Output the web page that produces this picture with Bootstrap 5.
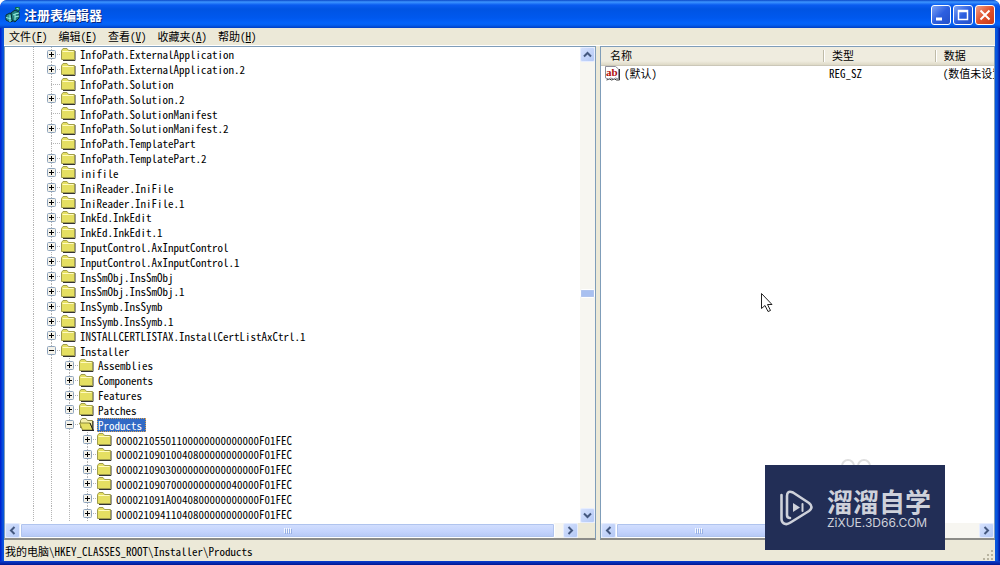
<!DOCTYPE html>
<html lang="zh-CN">
<head>
<meta charset="utf-8">
<meta name="viewport" content="width=device-width, initial-scale=1">
<title>注册表编辑器</title>
<link href="https://cdn.jsdelivr.net/npm/bootstrap@5.3.0/dist/css/bootstrap.min.css" rel="stylesheet">
<style>
:root { --face: #ece9d8; --edge: #7f9db9; --dots: #b4b4b4; }
body { background: #fff; color: #000; font: 11px/15px "Noto Sans Mono CJK SC", "Noto Sans CJK SC", "Liberation Mono", monospace; }
.window { background: linear-gradient(90deg, #0019cf, #0855dd 3px, #0855dd calc(100% - 3px), #0014a0); border-radius: 7px 7px 0 0; padding: 0 5px 0 4px; }
.window-foot { height: 4px; margin: 0 -5px 0 -4px; background: linear-gradient(#0a3fd0, #001590); }
.titlebar { height: 28px; margin: 0 -5px 0 -4px; padding: 2px 5px 0 5px; border-radius: 7px 7px 0 0; background: linear-gradient(#0a47c8, #3d95ff 2px, #0a5cf0 5px, #0054e3 9px, #0058ee 18px, #0463fa 23px, #0560f0 25px, #003fc4); }
.caption-text { font: bold 13px/20px "Noto Sans CJK SC", sans-serif; color: #fff; text-shadow: 1px 1px #0a2a80; margin-left: 3px; }
.winbtns { gap: 2px; }
.winbtn { width: 20px; height: 20px; border: 1px solid #fff; border-radius: 3px; background: linear-gradient(135deg, #7da2f5, #2d5fe0 50%, #2450c8); }
.winbtn.close-red { background: linear-gradient(135deg, #f0a08a, #e0512c 50%, #c83a18); }
.menu-strip { height: 17px; background: var(--face); padding-left: 5px; gap: 11px; }
.plain { border: 0; background: none; padding: 0; color: inherit; font: inherit; line-height: 15px; }
.panes { background: var(--face); display: grid; grid-template-columns: 592fr 4px 395fr; min-height: 0; border-top: 1px solid #fff; }
.pane { background: #fff; border: 1px solid var(--edge); border-bottom: 2px solid #8c8c88; min-width: 0; min-height: 0; }
.tree { margin: 0; padding: 0 0 2px 20px; list-style: none; }
.tree li { flex: 1 1 0; min-height: 0; line-height: 14px; }
.cell { width: 18px; flex: none; background: repeating-linear-gradient(var(--dots) 0 1px, transparent 1px 2px) 8px 0 / 1px 100% no-repeat; }
.cell.joint { background-image: repeating-linear-gradient(var(--dots) 0 1px, transparent 1px 2px), repeating-linear-gradient(90deg, var(--dots) 0 1px, transparent 1px 2px); background-size: 1px 100%, 10px 1px; background-position: 8px 0, 8px 50%; }
.cell svg { display: block; margin-left: 4px; }
.key-label { padding: 0 1px; margin-left: 3px; }
.picked { background: #316ac5; color: #fff; outline: 1px dotted #d8a050; outline-offset: -1px; padding-right: 4px; }
.sb-v { width: 15px; background: #f7f6f1; }
.sb-h { height: 15px; background: #f7f6f1; }
.sbtn { width: 15px; height: 15px; flex: none; padding: 0; border: 1px solid #e6edff; border-radius: 2px; background: linear-gradient(135deg, #d5e1fd, #b3c8f6); }
.thumb { border: 1px solid #fff; outline: 1px solid #b0c4ee; outline-offset: -2px; border-radius: 2px; background: linear-gradient(#d3dffe, #c3d3fd 60%, #b5c8f5); }
.sb-v .thumb { height: 9px; background: #a9c0f0; }
.track-top { flex: 53 1 0; }
.track-bottom { flex: 49 1 0; }
.thumb-values { width: 42%; }
.corner { width: 17px; background: var(--face); }
.values { table-layout: fixed; width: 100%; border-collapse: collapse; }
.col-name { width: 56.5%; }
.col-type { width: 28.4%; }
.values th { font-weight: normal; height: 18px; line-height: 17px; background: linear-gradient(#efecdf 14px, #ddd9c6); border-bottom: 1px solid #cbc7b8; padding: 0 0 0 9px; position: relative; }
.values th + th::before { content: ""; position: absolute; left: 0; top: 3px; height: 12px; border-left: 1px solid #bfbba8; border-right: 1px solid #fff; }
.values td { padding: 0 0 0 6px; line-height: 15px; white-space: nowrap; overflow: hidden; }
.statusline { height: 21px; background: var(--face); padding: 0 1px; line-height: 20px; }
.pointer { left: 76%; top: 292px; }
.brand { right: 55px; bottom: 15px; width: 180px; height: 85px; background: #222e56; color: #ced1da; padding-left: 14px; gap: 13px; }
.rings { right: 127px; bottom: 99px; }
.brand-name { font: bold 26px/30px "Noto Sans CJK SC", sans-serif; }
.brand-site { font: 12px/14px "Inter", sans-serif; }
</style>
</head>
<body>
<svg class="d-none">
  <symbol id="folder" viewBox="0 0 15 13"><path d="M2 12.5h12V3" fill="none" stroke="#333"/><path d="M.5 11.500v-9l1.500-2h4l1.500 2h6v9z" fill="#e5df62" stroke="#a09d4c"/><path d="M1.500 3.500h11" stroke="#fffbc0"/></symbol>
  <symbol id="opened" viewBox="0 0 15 13"><path d="M1.500 10V2.500l1.500-2h4l1.500 2h5V11" fill="#f4efaa" stroke="#8d8a4a"/><path d="M.5 5h10.500l3 7H3.500z" fill="#e5df62" stroke="#8d8a3a"/><path d="M11 5l3 7V3M3 12.500h12" fill="none" stroke="#222"/></symbol>
  <symbol id="plus" viewBox="0 0 9 9"><rect x=".5" y=".5" width="8" height="8" rx="1" fill="#f4f2ea" stroke="#8ea4bd"/><path d="M2 4.500h5M4.500 2v5" stroke="#000"/></symbol>
  <symbol id="minus" viewBox="0 0 9 9"><rect x=".5" y=".5" width="8" height="8" rx="1" fill="#f4f2ea" stroke="#8ea4bd"/><path d="M2 4.500h5" stroke="#000"/></symbol>
  <symbol id="chev" viewBox="0 0 13 13"><path d="M3 8.500 6.500 5 10 8.500" fill="none" stroke="#44587f" stroke-width="2"/></symbol>
  <symbol id="grip" viewBox="0 0 8 6"><path d="M.5 0v5M2.500 0v5M4.500 0v5M6.500 0v5" stroke="#f4f8ff"/><path d="M1.500 1v5M3.500 1v5M5.500 1v5M7.500 1v5" stroke="#98b0e4"/></symbol>
</svg>

<div class="window vh-100 d-flex flex-column position-relative overflow-hidden">
  <header class="titlebar d-flex align-items-center">
    <svg width="16" height="16" viewBox="0 0 16 16"><path d="M1 8l4-2 3 2v6l-3 1-4-2z" fill="#2c8f91" stroke="#082e35"/><path d="M5 8v7M1 10.500l4 1 3-1" stroke="#8ff0e2" fill="none"/><path d="M6 6l4-3 4 2v6l-4 4-3-2z" fill="#22827f" stroke="#082e35"/><path d="M10 7v6M8 8l2-1 4-1M10 10l4-1" stroke="#9cf0e4" fill="none"/><path d="M10 1l4-1v4z" fill="#7ce6de" stroke="#063"/></svg>
    <span class="caption-text flex-grow-1">注册表编辑器</span>
    <div class="winbtns d-flex">
      <button class="winbtn p-0 d-flex" aria-label="最小化"><svg width="18" height="18"><path d="M4 13h6" stroke="#fff" stroke-width="3"/></svg></button>
      <button class="winbtn p-0 d-flex" aria-label="最大化"><svg width="18" height="18"><path d="M4.500 4.500h9v9h-9zM4 5.500h10" fill="none" stroke="#fff" stroke-width="1.500"/></svg></button>
      <button class="winbtn close-red p-0 d-flex" aria-label="关闭"><svg width="18" height="18"><path d="M4.500 4.500l9 9m0-9l-9 9" stroke="#fff" stroke-width="2"/></svg></button>
    </div>
  </header>

  <nav class="menu-strip d-flex">
    <button class="plain">文件(<u>F</u>)</button>
    <button class="plain">编辑(<u>E</u>)</button>
    <button class="plain">查看(<u>V</u>)</button>
    <button class="plain">收藏夹(<u>A</u>)</button>
    <button class="plain">帮助(<u>H</u>)</button>
  </nav>

  <main class="panes flex-grow-1">
    <section class="pane d-flex flex-column">
      <div class="d-flex flex-grow-1 overflow-hidden">
        <ul class="tree d-flex flex-column flex-grow-1" id="tree"></ul>
        <div class="sb-v d-flex flex-column">
          <button class="sbtn" aria-label="向上"><svg class="d-block" width="13" height="13"><use href="#chev"/></svg></button>
          <div class="track-top"></div>
          <div class="thumb"></div>
          <div class="track-bottom"></div>
          <button class="sbtn" aria-label="向下"><svg class="d-block" width="13" height="13"><use href="#chev" transform="rotate(180 6.5 6.5)"/></svg></button>
        </div>
      </div>
      <div class="sb-h d-flex">
        <button class="sbtn" aria-label="向左"><svg class="d-block" width="13" height="13"><use href="#chev" transform="rotate(-90 6.5 6.5)"/></svg></button>
        <div class="thumb flex-grow-1 d-flex align-items-center justify-content-center"><svg width="8" height="6"><use href="#grip"/></svg></div>
        <div class="px-1"></div>
        <button class="sbtn" aria-label="向右"><svg class="d-block" width="13" height="13"><use href="#chev" transform="rotate(90 6.5 6.5)"/></svg></button>
        <div class="corner"></div>
      </div>
    </section>
    <div></div>
    <section class="pane d-flex flex-column">
      <div class="flex-grow-1 overflow-hidden">
        <table class="values">
          <colgroup><col class="col-name"><col class="col-type"><col></colgroup>
          <thead><tr><th>名称</th><th>类型</th><th>数据</th></tr></thead>
          <tbody><tr>
            <td class="ps-1"><svg class="align-top me-1" width="15" height="15" viewBox="0 0 15 15"><path d="M14.500 3v11h-3l-2-1-3 1-2-1-3 1" fill="none" stroke="#333"/><path d="M.5.5h10l3 2.500v10l-3-1-2 1-3-1-2 1-3-1z" fill="#fff" stroke="#8d8d99"/><text x="1" y="10" font-family="Liberation Serif" font-weight="bold" font-size="11" fill="#b00d0d">ab</text></svg>(默认)</td>
            <td>REG_SZ</td>
            <td class="ps-2">(数值未设置)</td>
          </tr></tbody>
        </table>
      </div>
      <div class="sb-h d-flex">
        <button class="sbtn" aria-label="向左"><svg class="d-block" width="13" height="13"><use href="#chev" transform="rotate(-90 6.5 6.5)"/></svg></button>
        <div class="thumb thumb-values d-flex align-items-center justify-content-center"><svg width="8" height="6"><use href="#grip"/></svg></div>
        <div class="flex-grow-1"></div>
        <button class="sbtn" aria-label="向右"><svg class="d-block" width="13" height="13"><use href="#chev" transform="rotate(90 6.5 6.5)"/></svg></button>
      </div>
    </section>
  </main>

  <footer class="statusline d-flex justify-content-between align-items-end">
    <span>我的电脑\HKEY_CLASSES_ROOT\Installer\Products</span>
    <svg width="12" height="12" fill="#b8b4a0"><path d="M9 1h2v2H9zM5 5h2v2H5zM9 5h2v2H9zM1 9h2v2H1zM5 9h2v2H5zM9 9h2v2H9z"/></svg>
  </footer>
  <div class="window-foot"></div>

  <svg class="pointer position-absolute" width="14" height="21" viewBox="0 0 14 21"><path d="M1.500 1.500v15l3.500-3 3 6 2.500-1-3-6H12z" fill="#fff" stroke="#222"/></svg>
  <svg class="rings position-absolute" width="34" height="10" fill="none" stroke="#dedede" stroke-width="2"><path d="M3 10a6 6 0 1 1 12 0M19 10a6 6 0 1 1 12 0"/></svg>
  <aside class="brand position-absolute d-flex align-items-center">
    <svg width="35" height="36" viewBox="0 0 35 36" fill="none" stroke="#ced1da" stroke-width="2.600" stroke-linecap="round" stroke-linejoin="round"><path d="M2.500 5v24q0 4 4 5 2 .5 5-1.500L30 21q5-4 0-8L14 2.500Q8 0 8 6v19q0 3 3 3"/><path d="M14 13l7 4.500-7 4.500z" fill="#ced1da" stroke="none"/><path d="M23.500 14v7" stroke-width="2"/></svg>
    <div><div class="brand-name">溜溜自学</div><div class="brand-site">ZiXUE.3D66.COM</div></div>
  </aside>
</div>

<script src="https://cdn.jsdelivr.net/npm/bootstrap@5.3.0/dist/js/bootstrap.bundle.min.js"></script>
<script>
// [depth, marker, name]: "+" collapsed, "-" expanded, "" leaf
const keys = [
  [1,"+","InfoPath.ExternalApplication"],[1,"+","InfoPath.ExternalApplication.2"],
  [1,"","InfoPath.Solution"],[1,"+","InfoPath.Solution.2"],
  [1,"","InfoPath.SolutionManifest"],[1,"+","InfoPath.SolutionManifest.2"],
  [1,"","InfoPath.TemplatePart"],[1,"+","InfoPath.TemplatePart.2"],
  [1,"+","inifile"],[1,"+","IniReader.IniFile"],[1,"+","IniReader.IniFile.1"],
  [1,"+","InkEd.InkEdit"],[1,"+","InkEd.InkEdit.1"],
  [1,"+","InputControl.AxInputControl"],[1,"+","InputControl.AxInputControl.1"],
  [1,"+","InsSmObj.InsSmObj"],[1,"+","InsSmObj.InsSmObj.1"],
  [1,"+","InsSymb.InsSymb"],[1,"+","InsSymb.InsSymb.1"],
  [1,"+","INSTALLCERTLISTAX.InstallCertListAxCtrl.1"],[1,"-","Installer"],
  [2,"+","Assemblies"],[2,"+","Components"],[2,"+","Features"],[2,"+","Patches"],[2,"-","Products"],
  [3,"+","00002105501100000000000000F01FEC"],[3,"+","00002109010040800000000000F01FEC"],
  [3,"+","00002109030000000000000000F01FEC"],[3,"+","00002109070000000000040000F01FEC"],
  [3,"+","000021091A0040800000000000F01FEC"],[3,"+","00002109411040800000000000F01FEC"]
];
document.getElementById("tree").innerHTML = keys.map(([depth, mark, name]) => {
  const open = name === "Products";
  const box = mark ? `<svg width="9" height="9"><use href="#${mark === "+" ? "plus" : "minus"}"/></svg>` : "";
  return `<li class="d-flex align-items-center">${'<span class="cell h-100"></span>'.repeat(depth)}` +
    `<span class="cell joint h-100 d-flex align-items-center">${box}</span>` +
    `<svg width="15" height="13" class="flex-shrink-0"><use href="#${open ? "opened" : "folder"}"/></svg>` +
    `<span class="key-label${open ? " picked" : ""}">${name}</span></li>`;
}).join("");
</script>
</body>
</html>
